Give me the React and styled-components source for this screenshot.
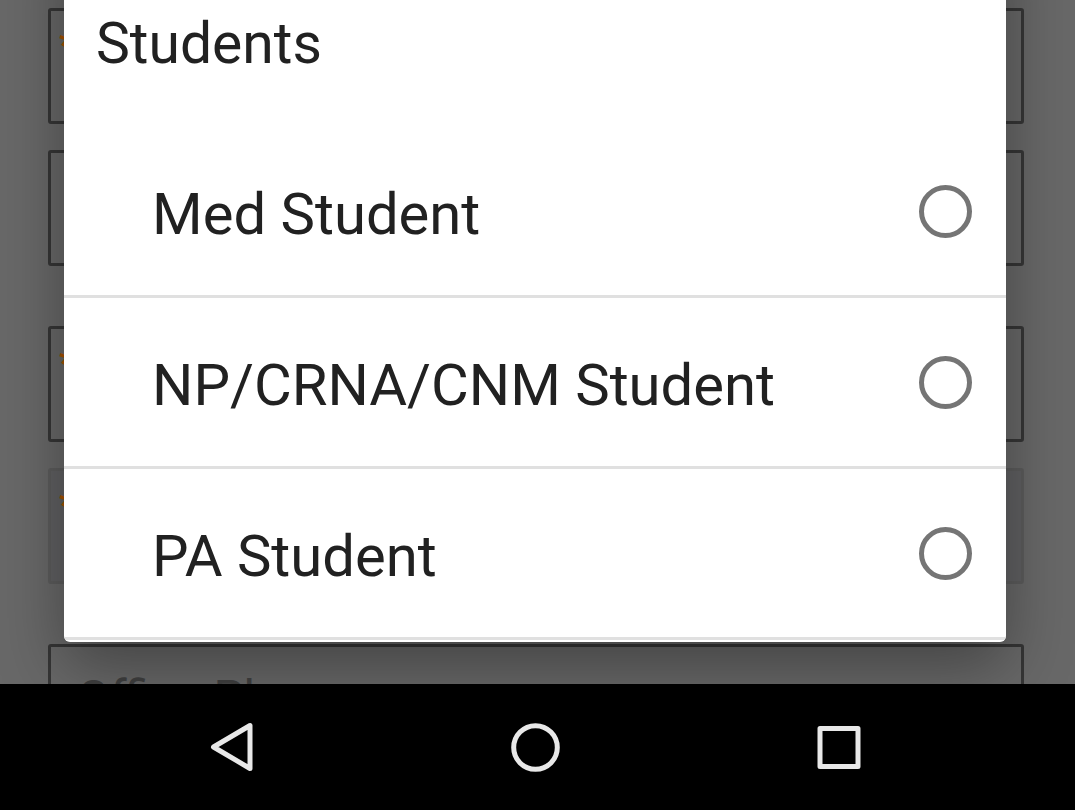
import React from "react";
import styled, { createGlobalStyle } from "styled-components";

const GlobalStyle = createGlobalStyle`
  *, *::before, *::after { box-sizing: border-box; }
  body {
    margin: 0;
    background: #000;
    font-family: Roboto, "Liberation Sans", sans-serif;
  }
`;

const Screen = styled.div`
  display: flex;
  flex-direction: column;
  height: 100vh;
  overflow: hidden;
`;

const Page = styled.main`
  position: relative;
  flex: 1;
  min-height: 0;
  overflow: hidden;
  background: #686868;
`;

const Form = styled.form`
  display: flex;
  flex-direction: column;
  gap: 60px;
  padding: 8px 51px 0 48px;
`;

const FieldGroup = styled.div`
  display: flex;
  flex-direction: column;
  gap: 26px;
`;

const Field = styled.label`
  display: flex;
  height: 116px;
  padding: 16px 8px 24px;
  border: 3px solid ${(p) => (p.$disabled ? "#5c5c5c" : "#363636")};
  border-radius: 3px;
  background: ${(p) => (p.$disabled ? "#606062" : "#686868")};
`;

const Required = styled.span`
  font-size: 36px;
  font-weight: 700;
  line-height: 36px;
  color: #a85200;
`;

const FieldInput = styled.input`
  flex: 1;
  min-width: 0;
  padding: 0 18px;
  border: 0;
  outline: 0;
  background: transparent;
  font: 48px/56px Roboto, "Liberation Sans", sans-serif;
  color: #333;
  &::placeholder { color: #404040; opacity: 1; }
`;

const Overlay = styled.div`
  position: absolute;
  inset: 0;
  display: flex;
  flex-direction: column;
  justify-content: flex-end;
  padding: 0 69px 42px 64px;
`;

const Dialog = styled.fieldset`
  flex: none;
  min-width: 0;
  margin: 0;
  padding: 80px 0 2px;
  border: 0;
  border-radius: 6px;
  overflow: hidden;
  background: #fff;
  color: #212121;
  box-shadow: 0 24px 64px rgba(0, 0, 0, 0.36);
`;

const GroupTitle = styled.h2`
  margin: 0;
  padding: 10px 32px 49px;
  font-size: 57px;
  line-height: 68px;
  font-weight: 400;
`;

const Option = styled.label`
  display: flex;
  align-items: center;
  justify-content: space-between;
  height: 171px;
  padding: 0 34px 0 88px;
  border-bottom: 3px solid #e0e0e0;
`;

const OptionText = styled.span`
  padding-top: 6px;
  font-size: 58px;
  line-height: 68px;
`;

const Radio = styled.input`
  appearance: none;
  flex: none;
  width: 53px;
  height: 53px;
  margin: 0;
  border: 5px solid #757575;
  border-radius: 50%;
  &:checked { box-shadow: inset 0 0 0 8px #fff; background: #757575; }
`;

const NavBar = styled.nav`
  flex: none;
  display: flex;
  height: 126px;
  padding: 0 84px 0 79px;
  background: #000;
`;

const NavButton = styled.button`
  flex: 1;
  display: flex;
  align-items: center;
  justify-content: center;
  padding: 0;
  border: 0;
  background: transparent;
  color: #e8e8e8;
`;

const NavIcon = ({ children }) => (
  <svg width="54" height="54" viewBox="0 0 54 54" fill="none" stroke="currentColor" strokeWidth="5" strokeLinejoin="round" aria-hidden="true">
    {children}
  </svg>
);

const FormField = ({ label, required, disabled, placeholder }) => (
  <Field $disabled={disabled}>
    {required && <Required>*</Required>}
    <FieldInput aria-label={label} disabled={disabled} placeholder={placeholder} />
  </Field>
);

const options = ["Med Student", "NP/CRNA/CNM Student", "PA Student"];

export default function App() {
  return (
    <Screen>
      <GlobalStyle />
      <Page>
        <Form>
          <FieldGroup>
            <FormField label="First field" required />
            <FormField label="Second field" />
          </FieldGroup>
          <FieldGroup>
            <FormField label="Third field" required />
            <FormField label="Fourth field" required disabled />
          </FieldGroup>
          <FieldGroup>
            <FormField label="Office Phone" placeholder="Office Phone" />
          </FieldGroup>
        </Form>
        <Overlay>
          <Dialog aria-labelledby="group-title">
            <GroupTitle id="group-title">Students</GroupTitle>
            {options.map((name) => (
              <Option key={name}>
                <OptionText>{name}</OptionText>
                <Radio type="radio" name="role" value={name} />
              </Option>
            ))}
          </Dialog>
        </Overlay>
      </Page>
      <NavBar>
        <NavButton aria-label="Back">
          <NavIcon><path d="M9.500 27 46 5.500V48.500Z" /></NavIcon>
        </NavButton>
        <NavButton aria-label="Home">
          <NavIcon><circle cx="27.500" cy="27.500" r="21.800" /></NavIcon>
        </NavButton>
        <NavButton aria-label="Recents">
          <NavIcon><rect x="8" y="8.500" width="38" height="38" /></NavIcon>
        </NavButton>
      </NavBar>
    </Screen>
  );
}
